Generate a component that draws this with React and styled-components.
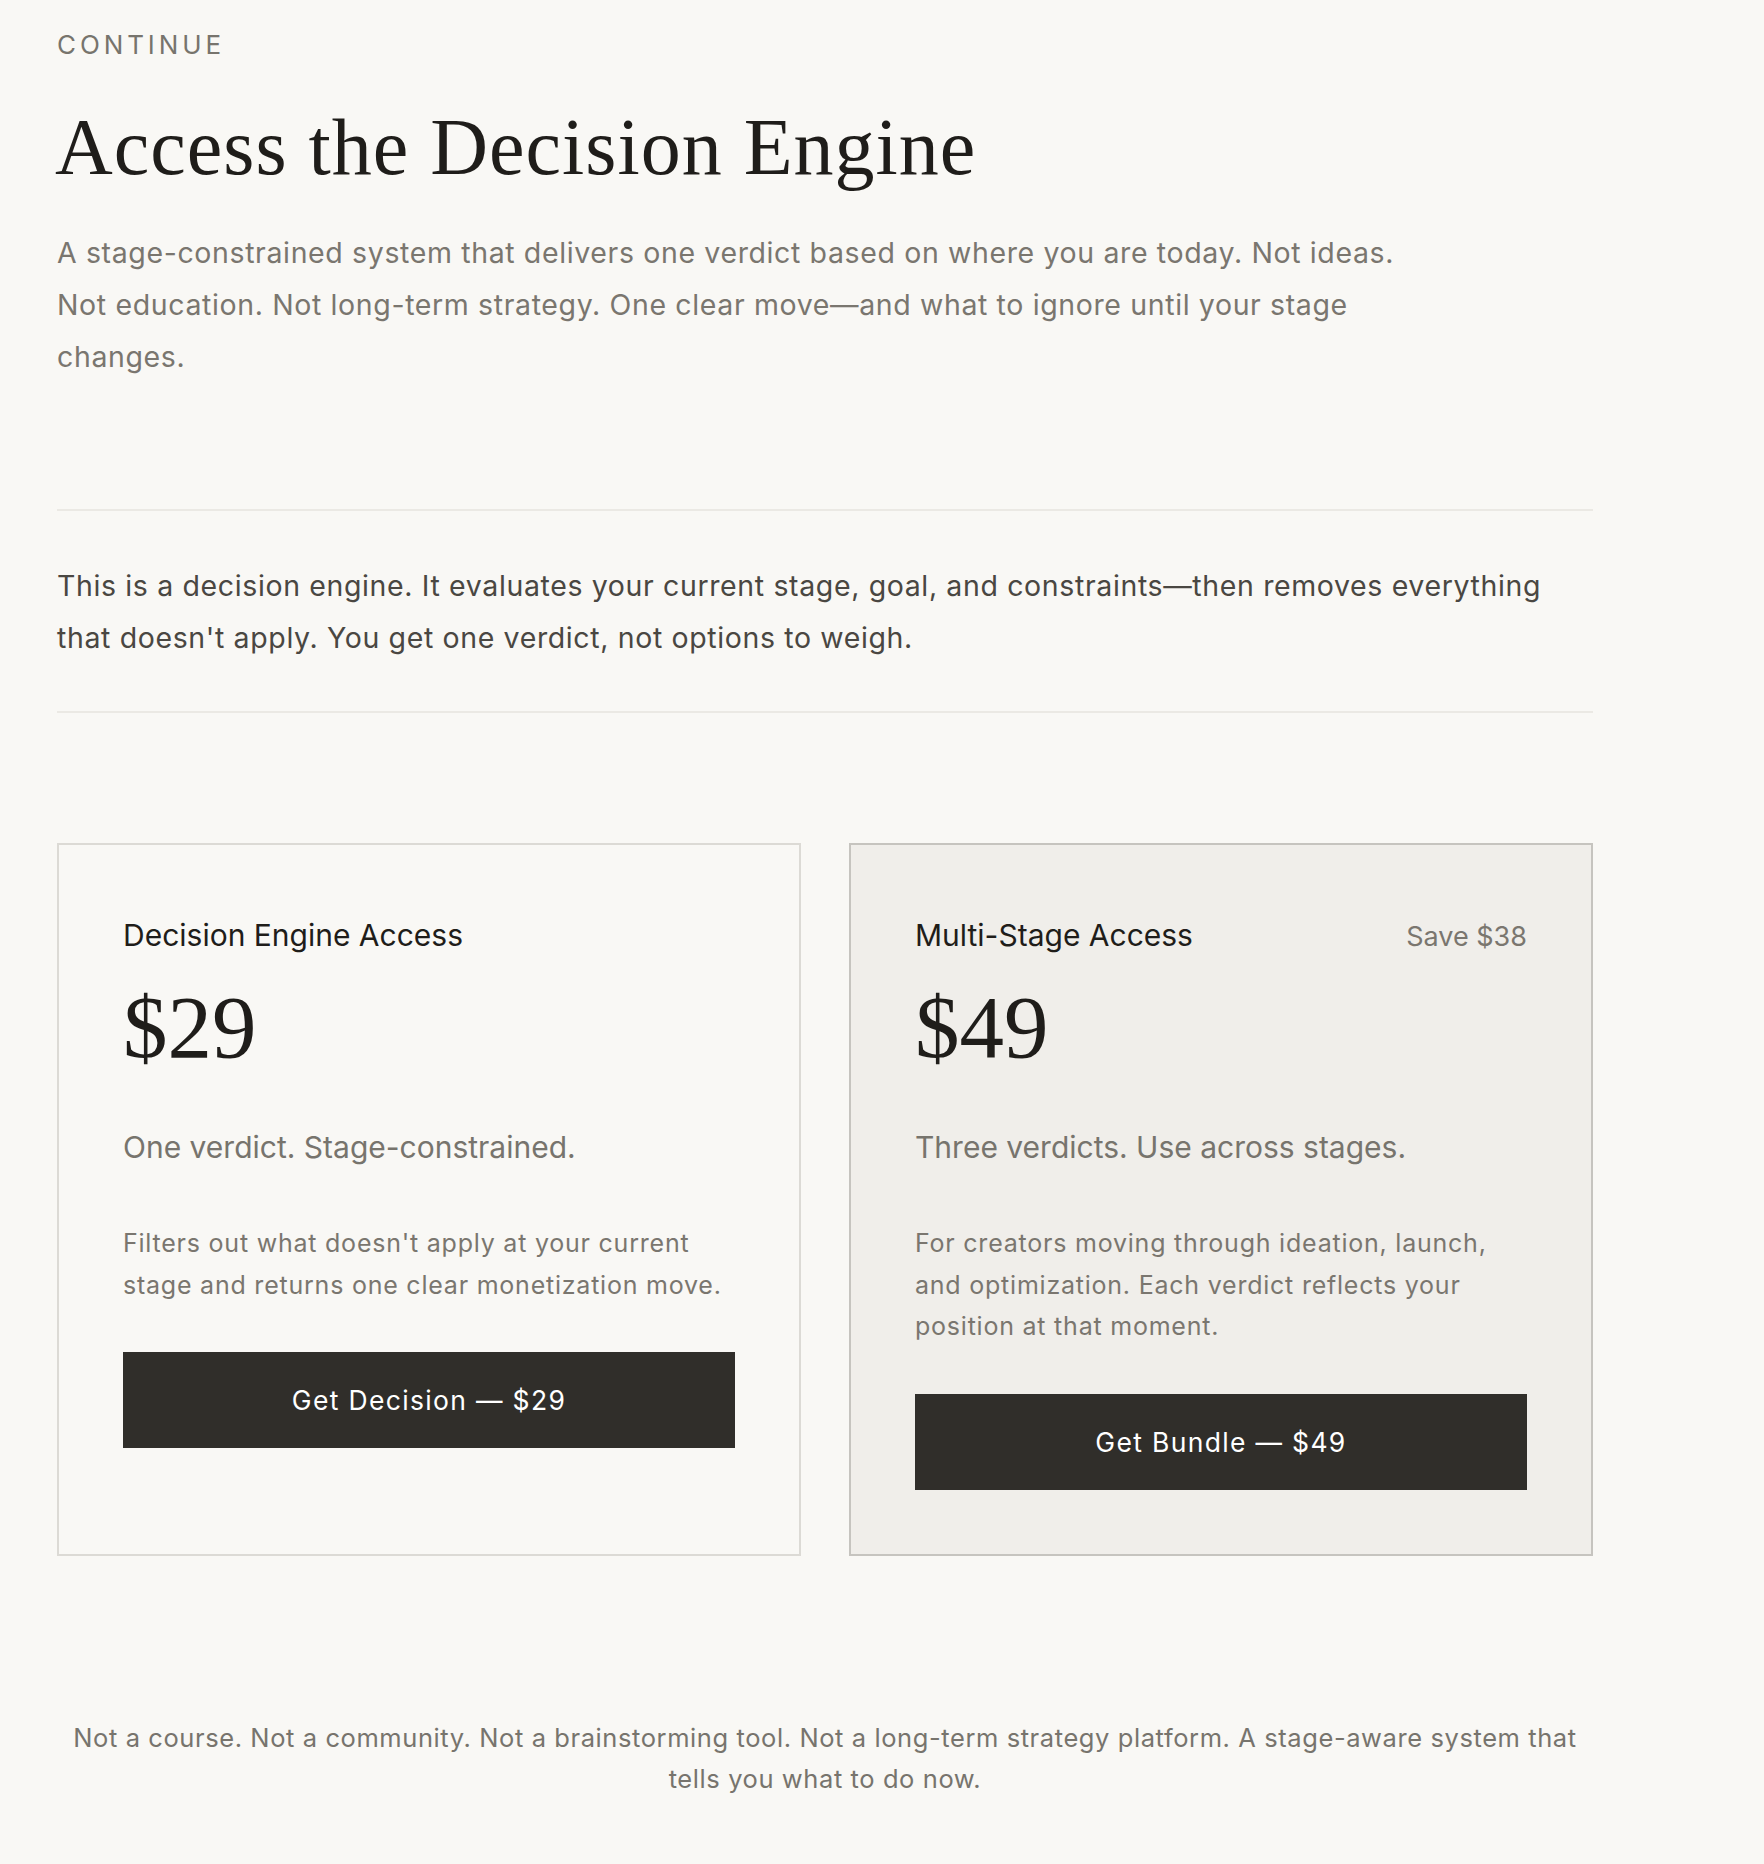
import React from "react";
import styled, { createGlobalStyle } from "styled-components";

const Global = createGlobalStyle`
  html, body { margin: 0; padding: 0; background: #f9f8f5; }
  body { font-family: Inter, "Noto Sans", sans-serif; -webkit-font-smoothing: antialiased; }
  * { box-sizing: border-box; }
`;

const Page = styled.main`
  padding: 25px 0 64px 57px;
  width: 1593px;
`;

const Eyebrow = styled.div`
  font-size: 26px;
  line-height: 39px;
  letter-spacing: 0.15em;
  color: #77746d;
  text-transform: uppercase;
`;

const Title = styled.h1`
  margin: 36px 0 0;
  margin-left: -2px;
  font-family: "Liberation Serif", serif;
  font-weight: 400;
  font-size: 80px;
  line-height: 94px;
  letter-spacing: 0.0125em;
  color: #1f1d1a;
`;

const Lead = styled.p`
  margin: 33px 0 0;
  max-width: 1370px;
  font-size: 28.5px;
  line-height: 52px;
  letter-spacing: 0.022em;
  color: #7a766f;
`;

const Statement = styled.section`
  margin-top: 126px;
  border-top: 2px solid #ebe9e4;
  border-bottom: 2px solid #ebe9e4;
  padding: 49px 0 47px;
`;

const StatementText = styled.p`
  margin: 0;
  max-width: 1510px;
  font-size: 28.5px;
  line-height: 52px;
  letter-spacing: 0.022em;
  color: #4a4742;
`;

const Cards = styled.div`
  margin-top: 130px;
  display: grid;
  grid-template-columns: 1fr 1fr;
  gap: 48px;
`;

const Card = styled.article`
  border: 2px solid ${(p) => (p.$featured ? "#c6c4bf" : "#dcdad5")};
  background: ${(p) => (p.$featured ? "#f0eeea" : "transparent")};
  padding: 64px;
  display: flex;
  flex-direction: column;
`;

const CardHead = styled.div`
  display: flex;
  justify-content: space-between;
  align-items: baseline;
`;

const CardName = styled.h2`
  margin: 0;
  font-size: 30px;
  font-weight: 400;
  line-height: 53px;
  color: #1f1d1a;
`;

const Save = styled.span`
  font-size: 27px;
  color: #7a766f;
`;

const Price = styled.div`
  margin-top: 23px;
  font-family: "Liberation Serif", serif;
  font-size: 89px;
  line-height: 84px;
  color: #1f1d1a;
`;

const Tagline = styled.p`
  margin: 57px 0 0;
  font-size: 30px;
  line-height: 42px;
  color: #77746d;
`;

const Details = styled.p`
  margin: 55px 0 0;
  font-size: 25px;
  line-height: 41.5px;
  letter-spacing: 0.031em;
  color: #7a766f;
`;

const Button = styled.button`
  margin-top: 46px;
  height: 96px;
  width: 100%;
  border: none;
  background: #302e2a;
  color: #ffffff;
  font-family: Inter, "Noto Sans", sans-serif;
  font-size: 26.5px;
  letter-spacing: 0.05em;
  cursor: pointer;
`;

const Footnote = styled.p`
  margin: 161px 0 0;
  text-align: center;
  font-size: 25.5px;
  line-height: 41.5px;
  letter-spacing: 0.023em;
  color: #77746d;
`;

const plans = [
  {
    name: "Decision Engine Access",
    price: "$29",
    tagline: "One verdict. Stage-constrained.",
    details:
      "Filters out what doesn't apply at your current stage and returns one clear monetization move.",
    cta: "Get Decision — $29",
  },
  {
    name: "Multi-Stage Access",
    save: "Save $38",
    price: "$49",
    tagline: "Three verdicts. Use across stages.",
    details:
      "For creators moving through ideation, launch, and optimization. Each verdict reflects your position at that moment.",
    cta: "Get Bundle — $49",
    featured: true,
  },
];

export default function App() {
  return (
    <>
      <Global />
      <Page>
        <Eyebrow>Continue</Eyebrow>
        <Title>Access the Decision Engine</Title>
        <Lead>
          A stage-constrained system that delivers one verdict based on where you are today. Not
          ideas. Not education. Not long-term strategy. One clear move—and what to ignore until
          your stage changes.
        </Lead>
        <Statement>
          <StatementText>
            This is a decision engine. It evaluates your current stage, goal, and constraints—then
            removes everything that doesn't apply. You get one verdict, not options to weigh.
          </StatementText>
        </Statement>
        <Cards>
          {plans.map((p) => (
            <Card key={p.name} $featured={p.featured}>
              <CardHead>
                <CardName>{p.name}</CardName>
                {p.save && <Save>{p.save}</Save>}
              </CardHead>
              <Price>{p.price}</Price>
              <Tagline>{p.tagline}</Tagline>
              <Details>{p.details}</Details>
              <Button>{p.cta}</Button>
            </Card>
          ))}
        </Cards>
        <Footnote>
          Not a course. Not a community. Not a brainstorming tool. Not a long-term strategy
          platform. A stage-aware system that tells you what to do now.
        </Footnote>
      </Page>
    </>
  );
}
